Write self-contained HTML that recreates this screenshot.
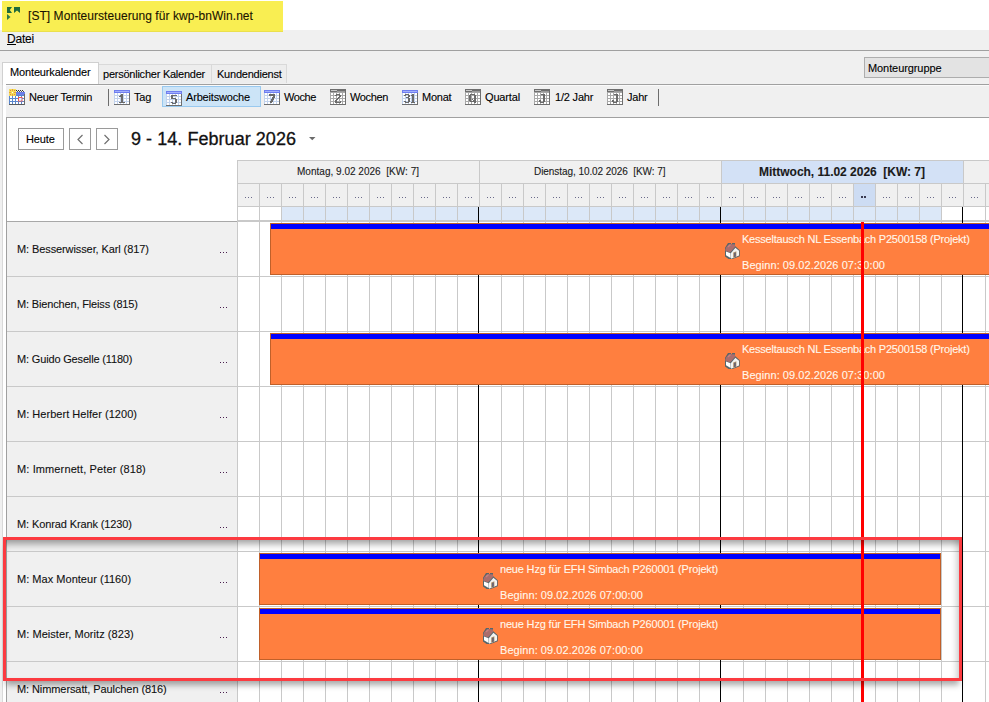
<!DOCTYPE html><html><head><meta charset="utf-8"><style>
html,body{margin:0;padding:0;}
body{width:989px;height:702px;position:relative;overflow:hidden;background:#fff;font-family:"Liberation Sans",sans-serif;}
div{position:absolute;box-sizing:border-box;}
.t{white-space:pre;-webkit-text-stroke:0.1px currentColor;}
svg{position:absolute;}
</style></head><body>
<div style="left:0px;top:30px;width:989px;height:20px;background:#f0f0f0;"></div>
<div style="left:2px;top:1px;width:281px;height:31px;background:#f9ee52;"></div>
<div style="left:2px;top:31px;width:281px;height:1px;background:#ebe04c;"></div>
<div style="left:0px;top:50px;width:989px;height:1px;background:#a0a0a0;"></div>
<svg style="left:7px;top:7px" width="14" height="14" viewBox="0 0 14 14">
<path d="M0 0h5l-2.2 3 2.2 3h-5z" fill="#1f6a3c"/>
<path d="M7 0h6v6l-3-2.5-3 2.5z" fill="#1f6a3c"/>
<path d="M0 7l3.5 3-3.5 3z" fill="#2b7a48"/>
</svg>
<div class="t" style="left:28px;top:9.5px;font-size:12px;line-height:12px;font-weight:normal;color:#1a1200;letter-spacing:0.057px;">[ST] Monteursteuerung für kwp-bnWin.net</div>
<div class="t" style="left:7px;top:33px;font-size:12px;line-height:12px;font-weight:normal;color:#000;letter-spacing:-0.203px;">Datei</div>
<div style="left:7px;top:44px;width:9px;height:1px;background:#000;"></div>
<div style="left:0px;top:51px;width:989px;height:34px;background:#f0f0f0;"></div>
<div style="left:0px;top:84px;width:2px;height:618px;background:#f0f0f0;"></div>
<div style="left:2px;top:84px;width:987px;height:618px;background:#fff;border-left:1px solid #d9d9d9;"></div>
<div style="left:98px;top:64px;width:114px;height:19px;background:#ededed;border:1px solid #d9d9d9;border-bottom:none;"></div>
<div style="left:211px;top:64px;width:76px;height:19px;background:#ededed;border:1px solid #d9d9d9;border-bottom:none;"></div>
<div style="left:2px;top:62px;width:97px;height:23px;background:#fff;border:1px solid #d0d0d0;border-bottom:none;"></div>
<div class="t" style="left:10px;top:67px;font-size:11px;line-height:11px;font-weight:normal;color:#000;letter-spacing:-0.143px;">Monteurkalender</div>
<div class="t" style="left:103px;top:69px;font-size:11px;line-height:11px;font-weight:normal;color:#000;letter-spacing:-0.238px;">persönlicher Kalender</div>
<div class="t" style="left:217px;top:69px;font-size:11px;line-height:11px;font-weight:normal;color:#000;letter-spacing:-0.223px;">Kundendienst</div>
<div style="left:864px;top:57px;width:125px;height:21px;background:#e3e3e3;border:1px solid #adadad;border-right:none;"></div>
<div class="t" style="left:868px;top:63px;font-size:11px;line-height:11px;font-weight:normal;color:#000;letter-spacing:-0.085px;">Monteurgruppe</div>
<div style="left:6px;top:84px;width:983px;height:1px;background:#a0a0a0;"></div>
<div style="left:6px;top:85px;width:983px;height:32px;background:#f0f0f0;"></div>
<div style="left:6px;top:85px;width:983px;height:1px;background:#fafafa;"></div>
<div style="left:162px;top:86px;width:99px;height:21px;background:#cce4f7;border:1px solid #99c9ef;"></div>
<div style="left:108px;top:89px;width:1px;height:17px;background:#6d6d6d;"></div>
<div style="left:658px;top:89px;width:1px;height:17px;background:#6d6d6d;"></div>
<svg style="left:9px;top:89px" width="16" height="16" viewBox="0 0 16 16"><rect x="0" y="5" width="16" height="11" fill="#5a86cc"/><rect x="6" y="3" width="10" height="3" fill="#6c7ee8"/><rect x="7" y="1" width="1" height="1" fill="#333"/><rect x="8" y="2" width="1" height="1" fill="#555"/><rect x="9" y="1" width="1" height="1" fill="#333"/><rect x="10" y="2" width="1" height="1" fill="#555"/><rect x="11" y="1" width="1" height="1" fill="#333"/><rect x="12" y="2" width="1" height="1" fill="#555"/><rect x="13" y="1" width="1" height="1" fill="#333"/><rect x="14" y="2" width="1" height="1" fill="#555"/><rect x="1" y="7" width="2" height="2" fill="#fff"/><rect x="4" y="7" width="2" height="2" fill="#fff"/><rect x="7" y="7" width="2" height="2" fill="#fff"/><rect x="10" y="7" width="2" height="2" fill="#fff"/><rect x="13" y="7" width="2" height="2" fill="#fff"/><rect x="1" y="10" width="2" height="2" fill="#fff"/><rect x="4" y="10" width="2" height="2" fill="#fff"/><rect x="7" y="10" width="2" height="2" fill="#fff"/><rect x="10" y="10" width="2" height="2" fill="#fff"/><rect x="13" y="10" width="2" height="2" fill="#fff"/><rect x="1" y="13" width="2" height="2" fill="#fff"/><rect x="4" y="13" width="2" height="2" fill="#fff"/><rect x="7" y="13" width="2" height="2" fill="#fff"/><rect x="10" y="13" width="2" height="2" fill="#fff"/><rect x="13" y="13" width="2" height="2" fill="#fff"/><rect x="9.5" y="8.5" width="3.5" height="3.5" fill="none" stroke="#e85858" stroke-width="1"/><rect x="10" y="9" width="2.5" height="2.5" fill="#e8f4ff"/><rect x="0" y="15" width="16" height="1" fill="#5a5a5a"/><rect x="15" y="5" width="1" height="11" fill="#6a6a6a"/><rect x="0" y="0" width="7" height="7" fill="#f6dc5a"/><rect x="1" y="1" width="1" height="1" fill="#e08a40"/><rect x="5" y="1" width="1" height="1" fill="#e08a40"/><rect x="1" y="5" width="1" height="1" fill="#e08a40"/><rect x="5" y="5" width="1" height="1" fill="#e08a40"/><rect x="3" y="0" width="1" height="2" fill="#e8a040"/><rect x="3" y="5" width="1" height="2" fill="#e8a040"/><rect x="0" y="3" width="2" height="1" fill="#e8a040"/><rect x="5" y="3" width="2" height="1" fill="#e8a040"/><rect x="3" y="3" width="1" height="1" fill="#fff"/></svg>
<div class="t" style="left:29px;top:92px;font-size:11px;line-height:11px;font-weight:normal;color:#000;letter-spacing:-0.218px;">Neuer Termin</div>
<svg style="left:114px;top:90px" width="16" height="15" viewBox="0 0 16 15" shape-rendering="crispEdges"><rect x="0" y="0" width="16" height="15" fill="#c2d2ec"/><rect x="0" y="0" width="16" height="3" fill="#6f7ef0"/><rect x="1" y="1" width="14" height="1" fill="#a3b0fa"/><rect x="1" y="3" width="2" height="2" fill="#fff"/><rect x="4" y="3" width="2" height="2" fill="#fff"/><rect x="7" y="3" width="2" height="2" fill="#fff"/><rect x="10" y="3" width="2" height="2" fill="#fff"/><rect x="13" y="3" width="2" height="2" fill="#fff"/><rect x="1" y="6" width="2" height="2" fill="#fff"/><rect x="4" y="6" width="2" height="2" fill="#fff"/><rect x="7" y="6" width="2" height="2" fill="#fff"/><rect x="10" y="6" width="2" height="2" fill="#fff"/><rect x="13" y="6" width="2" height="2" fill="#fff"/><rect x="1" y="9" width="2" height="2" fill="#fff"/><rect x="4" y="9" width="2" height="2" fill="#fff"/><rect x="7" y="9" width="2" height="2" fill="#fff"/><rect x="10" y="9" width="2" height="2" fill="#fff"/><rect x="13" y="9" width="2" height="2" fill="#fff"/><rect x="1" y="12" width="2" height="2" fill="#fff"/><rect x="4" y="12" width="2" height="2" fill="#fff"/><rect x="7" y="12" width="2" height="2" fill="#fff"/><rect x="10" y="12" width="2" height="2" fill="#fff"/><rect x="13" y="12" width="2" height="2" fill="#fff"/><rect x="15" y="3" width="1" height="12" fill="#6e6e6e"/><rect x="0" y="14" width="16" height="1" fill="#6e6e6e"/><rect x="7" y="4" width="2" height="1" fill="#6a6a6a"/><rect x="6" y="5" width="3" height="1" fill="#6a6a6a"/><rect x="5" y="6" width="4" height="1" fill="#6a6a6a"/><rect x="7" y="7" width="2" height="1" fill="#6a6a6a"/><rect x="7" y="8" width="2" height="1" fill="#6a6a6a"/><rect x="7" y="9" width="2" height="1" fill="#6a6a6a"/><rect x="7" y="10" width="2" height="1" fill="#6a6a6a"/><rect x="7" y="11" width="2" height="1" fill="#6a6a6a"/><rect x="5" y="12" width="6" height="1" fill="#6a6a6a"/></svg>
<div class="t" style="left:134px;top:92px;font-size:11px;line-height:11px;font-weight:normal;color:#000;letter-spacing:-0.178px;">Tag</div>
<svg style="left:166px;top:91px" width="16" height="15" viewBox="0 0 16 15" shape-rendering="crispEdges"><rect x="0" y="0" width="16" height="15" fill="#c2d2ec"/><rect x="0" y="0" width="16" height="3" fill="#6f7ef0"/><rect x="1" y="1" width="14" height="1" fill="#a3b0fa"/><rect x="1" y="3" width="2" height="2" fill="#fff"/><rect x="4" y="3" width="2" height="2" fill="#fff"/><rect x="7" y="3" width="2" height="2" fill="#fff"/><rect x="10" y="3" width="2" height="2" fill="#fff"/><rect x="13" y="3" width="2" height="2" fill="#fff"/><rect x="1" y="6" width="2" height="2" fill="#fff"/><rect x="4" y="6" width="2" height="2" fill="#fff"/><rect x="7" y="6" width="2" height="2" fill="#fff"/><rect x="10" y="6" width="2" height="2" fill="#fff"/><rect x="13" y="6" width="2" height="2" fill="#fff"/><rect x="1" y="9" width="2" height="2" fill="#fff"/><rect x="4" y="9" width="2" height="2" fill="#fff"/><rect x="7" y="9" width="2" height="2" fill="#fff"/><rect x="10" y="9" width="2" height="2" fill="#fff"/><rect x="13" y="9" width="2" height="2" fill="#fff"/><rect x="1" y="12" width="2" height="2" fill="#fff"/><rect x="4" y="12" width="2" height="2" fill="#fff"/><rect x="7" y="12" width="2" height="2" fill="#fff"/><rect x="10" y="12" width="2" height="2" fill="#fff"/><rect x="13" y="12" width="2" height="2" fill="#fff"/><rect x="15" y="3" width="1" height="12" fill="#6e6e6e"/><rect x="0" y="14" width="16" height="1" fill="#6e6e6e"/><rect x="5" y="4" width="6" height="1" fill="#6a6a6a"/><rect x="5" y="5" width="2" height="1" fill="#6a6a6a"/><rect x="5" y="6" width="2" height="1" fill="#6a6a6a"/><rect x="5" y="7" width="5" height="1" fill="#6a6a6a"/><rect x="9" y="8" width="2" height="1" fill="#6a6a6a"/><rect x="9" y="9" width="2" height="1" fill="#6a6a6a"/><rect x="9" y="10" width="2" height="1" fill="#6a6a6a"/><rect x="5" y="11" width="2" height="1" fill="#6a6a6a"/><rect x="9" y="11" width="2" height="1" fill="#6a6a6a"/><rect x="6" y="12" width="4" height="1" fill="#6a6a6a"/></svg>
<div class="t" style="left:186px;top:92px;font-size:11px;line-height:11px;font-weight:normal;color:#000;letter-spacing:-0.169px;">Arbeitswoche</div>
<svg style="left:264px;top:90px" width="16" height="15" viewBox="0 0 16 15" shape-rendering="crispEdges"><rect x="0" y="0" width="16" height="15" fill="#c2d2ec"/><rect x="0" y="0" width="16" height="3" fill="#6f7ef0"/><rect x="1" y="1" width="14" height="1" fill="#a3b0fa"/><rect x="1" y="3" width="2" height="2" fill="#fff"/><rect x="4" y="3" width="2" height="2" fill="#fff"/><rect x="7" y="3" width="2" height="2" fill="#fff"/><rect x="10" y="3" width="2" height="2" fill="#fff"/><rect x="13" y="3" width="2" height="2" fill="#fff"/><rect x="1" y="6" width="2" height="2" fill="#fff"/><rect x="4" y="6" width="2" height="2" fill="#fff"/><rect x="7" y="6" width="2" height="2" fill="#fff"/><rect x="10" y="6" width="2" height="2" fill="#fff"/><rect x="13" y="6" width="2" height="2" fill="#fff"/><rect x="1" y="9" width="2" height="2" fill="#fff"/><rect x="4" y="9" width="2" height="2" fill="#fff"/><rect x="7" y="9" width="2" height="2" fill="#fff"/><rect x="10" y="9" width="2" height="2" fill="#fff"/><rect x="13" y="9" width="2" height="2" fill="#fff"/><rect x="1" y="12" width="2" height="2" fill="#fff"/><rect x="4" y="12" width="2" height="2" fill="#fff"/><rect x="7" y="12" width="2" height="2" fill="#fff"/><rect x="10" y="12" width="2" height="2" fill="#fff"/><rect x="13" y="12" width="2" height="2" fill="#fff"/><rect x="15" y="3" width="1" height="12" fill="#6e6e6e"/><rect x="0" y="14" width="16" height="1" fill="#6e6e6e"/><rect x="5" y="4" width="6" height="1" fill="#6a6a6a"/><rect x="5" y="5" width="6" height="1" fill="#6a6a6a"/><rect x="9" y="6" width="2" height="1" fill="#6a6a6a"/><rect x="8" y="7" width="3" height="1" fill="#6a6a6a"/><rect x="8" y="8" width="2" height="1" fill="#6a6a6a"/><rect x="7" y="9" width="3" height="1" fill="#6a6a6a"/><rect x="7" y="10" width="2" height="1" fill="#6a6a6a"/><rect x="6" y="11" width="3" height="1" fill="#6a6a6a"/><rect x="6" y="12" width="2" height="1" fill="#6a6a6a"/></svg>
<div class="t" style="left:284px;top:92px;font-size:11px;line-height:11px;font-weight:normal;color:#000;letter-spacing:-0.407px;">Woche</div>
<svg style="left:330px;top:89px" width="16" height="16" viewBox="0 0 16 16" shape-rendering="crispEdges"><rect x="0" y="0" width="16" height="16" fill="#a8a8a8"/><rect x="0" y="0" width="16" height="3" fill="#6e6e6e"/><rect x="1" y="1" width="6" height="1" fill="#c8c8c8"/><rect x="7" y="2" width="8" height="1" fill="#9a9a9a"/><rect x="1" y="4" width="2" height="2" fill="#fff"/><rect x="4" y="4" width="2" height="2" fill="#fff"/><rect x="7" y="4" width="2" height="2" fill="#fff"/><rect x="10" y="4" width="2" height="2" fill="#fff"/><rect x="13" y="4" width="2" height="2" fill="#fff"/><rect x="1" y="7" width="2" height="2" fill="#fff"/><rect x="4" y="7" width="2" height="2" fill="#fff"/><rect x="7" y="7" width="2" height="2" fill="#fff"/><rect x="10" y="7" width="2" height="2" fill="#fff"/><rect x="13" y="7" width="2" height="2" fill="#fff"/><rect x="1" y="10" width="2" height="2" fill="#fff"/><rect x="4" y="10" width="2" height="2" fill="#fff"/><rect x="7" y="10" width="2" height="2" fill="#fff"/><rect x="10" y="10" width="2" height="2" fill="#fff"/><rect x="13" y="10" width="2" height="2" fill="#fff"/><rect x="1" y="13" width="2" height="2" fill="#fff"/><rect x="4" y="13" width="2" height="2" fill="#fff"/><rect x="7" y="13" width="2" height="2" fill="#fff"/><rect x="10" y="13" width="2" height="2" fill="#fff"/><rect x="13" y="13" width="2" height="2" fill="#fff"/><rect x="15" y="3" width="1" height="13" fill="#6e6e6e"/><rect x="0" y="15" width="16" height="1" fill="#6e6e6e"/><rect x="6" y="5" width="4" height="1" fill="#6a6a6a"/><rect x="5" y="6" width="2" height="1" fill="#6a6a6a"/><rect x="9" y="6" width="2" height="1" fill="#6a6a6a"/><rect x="9" y="7" width="2" height="1" fill="#6a6a6a"/><rect x="8" y="8" width="2" height="1" fill="#6a6a6a"/><rect x="7" y="9" width="2" height="1" fill="#6a6a6a"/><rect x="6" y="10" width="2" height="1" fill="#6a6a6a"/><rect x="5" y="11" width="2" height="1" fill="#6a6a6a"/><rect x="5" y="12" width="2" height="1" fill="#6a6a6a"/><rect x="10" y="12" width="1" height="1" fill="#6a6a6a"/><rect x="5" y="13" width="6" height="1" fill="#6a6a6a"/></svg>
<div class="t" style="left:350px;top:92px;font-size:11px;line-height:11px;font-weight:normal;color:#000;letter-spacing:-0.359px;">Wochen</div>
<svg style="left:402px;top:90px" width="16" height="15" viewBox="0 0 16 15" shape-rendering="crispEdges"><rect x="0" y="0" width="16" height="15" fill="#c2d2ec"/><rect x="0" y="0" width="16" height="3" fill="#6f7ef0"/><rect x="1" y="1" width="14" height="1" fill="#a3b0fa"/><rect x="1" y="3" width="2" height="2" fill="#fff"/><rect x="4" y="3" width="2" height="2" fill="#fff"/><rect x="7" y="3" width="2" height="2" fill="#fff"/><rect x="10" y="3" width="2" height="2" fill="#fff"/><rect x="13" y="3" width="2" height="2" fill="#fff"/><rect x="1" y="6" width="2" height="2" fill="#fff"/><rect x="4" y="6" width="2" height="2" fill="#fff"/><rect x="7" y="6" width="2" height="2" fill="#fff"/><rect x="10" y="6" width="2" height="2" fill="#fff"/><rect x="13" y="6" width="2" height="2" fill="#fff"/><rect x="1" y="9" width="2" height="2" fill="#fff"/><rect x="4" y="9" width="2" height="2" fill="#fff"/><rect x="7" y="9" width="2" height="2" fill="#fff"/><rect x="10" y="9" width="2" height="2" fill="#fff"/><rect x="13" y="9" width="2" height="2" fill="#fff"/><rect x="1" y="12" width="2" height="2" fill="#fff"/><rect x="4" y="12" width="2" height="2" fill="#fff"/><rect x="7" y="12" width="2" height="2" fill="#fff"/><rect x="10" y="12" width="2" height="2" fill="#fff"/><rect x="13" y="12" width="2" height="2" fill="#fff"/><rect x="15" y="3" width="1" height="12" fill="#6e6e6e"/><rect x="0" y="14" width="16" height="1" fill="#6e6e6e"/><rect x="3" y="4" width="4" height="1" fill="#6a6a6a"/><rect x="10" y="4" width="2" height="1" fill="#6a6a6a"/><rect x="2" y="5" width="2" height="1" fill="#6a6a6a"/><rect x="6" y="5" width="2" height="1" fill="#6a6a6a"/><rect x="9" y="5" width="3" height="1" fill="#6a6a6a"/><rect x="6" y="6" width="2" height="1" fill="#6a6a6a"/><rect x="10" y="6" width="2" height="1" fill="#6a6a6a"/><rect x="4" y="7" width="3" height="1" fill="#6a6a6a"/><rect x="10" y="7" width="2" height="1" fill="#6a6a6a"/><rect x="6" y="8" width="2" height="1" fill="#6a6a6a"/><rect x="10" y="8" width="2" height="1" fill="#6a6a6a"/><rect x="6" y="9" width="2" height="1" fill="#6a6a6a"/><rect x="10" y="9" width="2" height="1" fill="#6a6a6a"/><rect x="6" y="10" width="2" height="1" fill="#6a6a6a"/><rect x="10" y="10" width="2" height="1" fill="#6a6a6a"/><rect x="2" y="11" width="2" height="1" fill="#6a6a6a"/><rect x="6" y="11" width="2" height="1" fill="#6a6a6a"/><rect x="10" y="11" width="2" height="1" fill="#6a6a6a"/><rect x="3" y="12" width="4" height="1" fill="#6a6a6a"/><rect x="9" y="12" width="4" height="1" fill="#6a6a6a"/></svg>
<div class="t" style="left:422px;top:92px;font-size:11px;line-height:11px;font-weight:normal;color:#000;letter-spacing:-0.234px;">Monat</div>
<svg style="left:465px;top:89px" width="16" height="16" viewBox="0 0 16 16" shape-rendering="crispEdges"><rect x="0" y="0" width="16" height="16" fill="#a8a8a8"/><rect x="0" y="0" width="16" height="3" fill="#6e6e6e"/><rect x="1" y="1" width="6" height="1" fill="#c8c8c8"/><rect x="7" y="2" width="8" height="1" fill="#9a9a9a"/><rect x="1" y="4" width="2" height="2" fill="#fff"/><rect x="4" y="4" width="2" height="2" fill="#fff"/><rect x="7" y="4" width="2" height="2" fill="#fff"/><rect x="10" y="4" width="2" height="2" fill="#fff"/><rect x="13" y="4" width="2" height="2" fill="#fff"/><rect x="1" y="7" width="2" height="2" fill="#fff"/><rect x="4" y="7" width="2" height="2" fill="#fff"/><rect x="7" y="7" width="2" height="2" fill="#fff"/><rect x="10" y="7" width="2" height="2" fill="#fff"/><rect x="13" y="7" width="2" height="2" fill="#fff"/><rect x="1" y="10" width="2" height="2" fill="#fff"/><rect x="4" y="10" width="2" height="2" fill="#fff"/><rect x="7" y="10" width="2" height="2" fill="#fff"/><rect x="10" y="10" width="2" height="2" fill="#fff"/><rect x="13" y="10" width="2" height="2" fill="#fff"/><rect x="1" y="13" width="2" height="2" fill="#fff"/><rect x="4" y="13" width="2" height="2" fill="#fff"/><rect x="7" y="13" width="2" height="2" fill="#fff"/><rect x="10" y="13" width="2" height="2" fill="#fff"/><rect x="13" y="13" width="2" height="2" fill="#fff"/><rect x="15" y="3" width="1" height="13" fill="#6e6e6e"/><rect x="0" y="15" width="16" height="1" fill="#6e6e6e"/><rect x="5" y="5" width="5" height="1" fill="#6a6a6a"/><rect x="4" y="6" width="2" height="1" fill="#6a6a6a"/><rect x="9" y="6" width="2" height="1" fill="#6a6a6a"/><rect x="4" y="7" width="2" height="1" fill="#6a6a6a"/><rect x="9" y="7" width="2" height="1" fill="#6a6a6a"/><rect x="4" y="8" width="2" height="1" fill="#6a6a6a"/><rect x="9" y="8" width="2" height="1" fill="#6a6a6a"/><rect x="4" y="9" width="2" height="1" fill="#6a6a6a"/><rect x="9" y="9" width="2" height="1" fill="#6a6a6a"/><rect x="4" y="10" width="2" height="1" fill="#6a6a6a"/><rect x="7" y="10" width="1" height="1" fill="#6a6a6a"/><rect x="9" y="10" width="2" height="1" fill="#6a6a6a"/><rect x="4" y="11" width="2" height="1" fill="#6a6a6a"/><rect x="8" y="11" width="3" height="1" fill="#6a6a6a"/><rect x="5" y="12" width="6" height="1" fill="#6a6a6a"/><rect x="9" y="13" width="2" height="1" fill="#6a6a6a"/></svg>
<div class="t" style="left:485px;top:92px;font-size:11px;line-height:11px;font-weight:normal;color:#000;letter-spacing:-0.153px;">Quartal</div>
<svg style="left:534px;top:89px" width="16" height="16" viewBox="0 0 16 16" shape-rendering="crispEdges"><rect x="0" y="0" width="16" height="16" fill="#a8a8a8"/><rect x="0" y="0" width="16" height="3" fill="#6e6e6e"/><rect x="1" y="1" width="6" height="1" fill="#c8c8c8"/><rect x="7" y="2" width="8" height="1" fill="#9a9a9a"/><rect x="1" y="4" width="2" height="2" fill="#fff"/><rect x="4" y="4" width="2" height="2" fill="#fff"/><rect x="7" y="4" width="2" height="2" fill="#fff"/><rect x="10" y="4" width="2" height="2" fill="#fff"/><rect x="13" y="4" width="2" height="2" fill="#fff"/><rect x="1" y="7" width="2" height="2" fill="#fff"/><rect x="4" y="7" width="2" height="2" fill="#fff"/><rect x="7" y="7" width="2" height="2" fill="#fff"/><rect x="10" y="7" width="2" height="2" fill="#fff"/><rect x="13" y="7" width="2" height="2" fill="#fff"/><rect x="1" y="10" width="2" height="2" fill="#fff"/><rect x="4" y="10" width="2" height="2" fill="#fff"/><rect x="7" y="10" width="2" height="2" fill="#fff"/><rect x="10" y="10" width="2" height="2" fill="#fff"/><rect x="13" y="10" width="2" height="2" fill="#fff"/><rect x="1" y="13" width="2" height="2" fill="#fff"/><rect x="4" y="13" width="2" height="2" fill="#fff"/><rect x="7" y="13" width="2" height="2" fill="#fff"/><rect x="10" y="13" width="2" height="2" fill="#fff"/><rect x="13" y="13" width="2" height="2" fill="#fff"/><rect x="15" y="3" width="1" height="13" fill="#6e6e6e"/><rect x="0" y="15" width="16" height="1" fill="#6e6e6e"/><rect x="7" y="5" width="4" height="1" fill="#6a6a6a"/><rect x="9" y="6" width="2" height="1" fill="#6a6a6a"/><rect x="9" y="7" width="2" height="1" fill="#6a6a6a"/><rect x="9" y="8" width="2" height="1" fill="#6a6a6a"/><rect x="9" y="9" width="2" height="1" fill="#6a6a6a"/><rect x="9" y="10" width="2" height="1" fill="#6a6a6a"/><rect x="5" y="11" width="2" height="1" fill="#6a6a6a"/><rect x="9" y="11" width="2" height="1" fill="#6a6a6a"/><rect x="5" y="12" width="2" height="1" fill="#6a6a6a"/><rect x="9" y="12" width="2" height="1" fill="#6a6a6a"/><rect x="6" y="13" width="4" height="1" fill="#6a6a6a"/></svg>
<div class="t" style="left:555px;top:92px;font-size:11px;line-height:11px;font-weight:normal;color:#000;letter-spacing:-0.193px;">1/2 Jahr</div>
<svg style="left:607px;top:89px" width="16" height="16" viewBox="0 0 16 16" shape-rendering="crispEdges"><rect x="0" y="0" width="16" height="16" fill="#a8a8a8"/><rect x="0" y="0" width="16" height="3" fill="#6e6e6e"/><rect x="1" y="1" width="6" height="1" fill="#c8c8c8"/><rect x="7" y="2" width="8" height="1" fill="#9a9a9a"/><rect x="1" y="4" width="2" height="2" fill="#fff"/><rect x="4" y="4" width="2" height="2" fill="#fff"/><rect x="7" y="4" width="2" height="2" fill="#fff"/><rect x="10" y="4" width="2" height="2" fill="#fff"/><rect x="13" y="4" width="2" height="2" fill="#fff"/><rect x="1" y="7" width="2" height="2" fill="#fff"/><rect x="4" y="7" width="2" height="2" fill="#fff"/><rect x="7" y="7" width="2" height="2" fill="#fff"/><rect x="10" y="7" width="2" height="2" fill="#fff"/><rect x="13" y="7" width="2" height="2" fill="#fff"/><rect x="1" y="10" width="2" height="2" fill="#fff"/><rect x="4" y="10" width="2" height="2" fill="#fff"/><rect x="7" y="10" width="2" height="2" fill="#fff"/><rect x="10" y="10" width="2" height="2" fill="#fff"/><rect x="13" y="10" width="2" height="2" fill="#fff"/><rect x="1" y="13" width="2" height="2" fill="#fff"/><rect x="4" y="13" width="2" height="2" fill="#fff"/><rect x="7" y="13" width="2" height="2" fill="#fff"/><rect x="10" y="13" width="2" height="2" fill="#fff"/><rect x="13" y="13" width="2" height="2" fill="#fff"/><rect x="15" y="3" width="1" height="13" fill="#6e6e6e"/><rect x="0" y="15" width="16" height="1" fill="#6e6e6e"/><rect x="7" y="5" width="4" height="1" fill="#6a6a6a"/><rect x="9" y="6" width="2" height="1" fill="#6a6a6a"/><rect x="9" y="7" width="2" height="1" fill="#6a6a6a"/><rect x="9" y="8" width="2" height="1" fill="#6a6a6a"/><rect x="9" y="9" width="2" height="1" fill="#6a6a6a"/><rect x="9" y="10" width="2" height="1" fill="#6a6a6a"/><rect x="5" y="11" width="2" height="1" fill="#6a6a6a"/><rect x="9" y="11" width="2" height="1" fill="#6a6a6a"/><rect x="5" y="12" width="2" height="1" fill="#6a6a6a"/><rect x="9" y="12" width="2" height="1" fill="#6a6a6a"/><rect x="6" y="13" width="4" height="1" fill="#6a6a6a"/></svg>
<div class="t" style="left:627px;top:92px;font-size:11px;line-height:11px;font-weight:normal;color:#000;letter-spacing:-0.225px;">Jahr</div>
<div style="left:6px;top:117px;width:983px;height:1px;background:#a0a0a0;"></div>
<div style="left:6px;top:117px;width:1px;height:585px;background:#a0a0a0;"></div>
<div style="left:18px;top:128px;width:46px;height:22px;background:#fff;border:1px solid #9a9a9a;"></div>
<div class="t" style="left:26px;top:134px;font-size:11px;line-height:11px;font-weight:normal;color:#000;letter-spacing:-0.151px;">Heute</div>
<div style="left:69px;top:128px;width:22px;height:22px;background:#fff;border:1px solid #9a9a9a;"></div>
<div style="left:96px;top:128px;width:22px;height:22px;background:#fff;border:1px solid #9a9a9a;"></div>
<svg style="left:69px;top:128px" width="22" height="22"><path d="M13.5 7 L9 11.5 L13.5 16" stroke="#707070" stroke-width="1.2" fill="none"/></svg>
<svg style="left:96px;top:128px" width="22" height="22"><path d="M8.5 7 L13 11.5 L8.5 16" stroke="#707070" stroke-width="1.2" fill="none"/></svg>
<div class="t" style="left:131px;top:130px;font-size:18px;line-height:18px;font-weight:normal;color:#111;letter-spacing:0.045px;-webkit-text-stroke:0.3px #111;">9 - 14. Februar 2026</div>
<svg style="left:308px;top:136px" width="9" height="6"><path d="M1 1h6.5l-3.25 3.2z" fill="#6a6a6a"/></svg>
<div style="left:237px;top:160px;width:752px;height:1px;background:#c9c9c9"></div>
<div style="left:237px;top:161px;width:752px;height:22px;background:#f0f0f0;"></div>
<div style="left:721px;top:161px;width:242px;height:22px;background:#d3e1f6;"></div>
<div style="left:237px;top:183px;width:752px;height:1px;background:#c9c9c9"></div>
<div style="left:237px;top:184px;width:752px;height:22px;background:#f0f0f0;"></div>
<div style="left:853px;top:184px;width:22px;height:22px;background:#cddcf3;"></div>
<div style="left:237px;top:206px;width:752px;height:1px;background:#c9c9c9"></div>
<div style="left:237px;top:207px;width:752px;height:13px;background:#fff;"></div>
<div style="left:281px;top:207px;width:660px;height:13px;background:#dce8f8;"></div>
<div style="left:237px;top:220px;width:752px;height:2px;background:#c9c9c9"></div>
<div style="left:237px;top:160px;width:1px;height:542px;background:#c9c9c9"></div>
<div style="left:259px;top:184px;width:1px;height:22px;background:#c9c9c9"></div>
<div style="left:259px;top:207px;width:1px;height:13px;background:#c9c9c9"></div>
<div style="left:259px;top:222px;width:1px;height:480px;background:#c9c9c9"></div>
<div style="left:281px;top:184px;width:1px;height:22px;background:#c9c9c9"></div>
<div style="left:281px;top:207px;width:1px;height:13px;background:#c9c9c9"></div>
<div style="left:281px;top:222px;width:1px;height:480px;background:#c9c9c9"></div>
<div style="left:303px;top:184px;width:1px;height:22px;background:#c9c9c9"></div>
<div style="left:303px;top:207px;width:1px;height:13px;background:#c9c9c9"></div>
<div style="left:303px;top:222px;width:1px;height:480px;background:#c9c9c9"></div>
<div style="left:325px;top:184px;width:1px;height:22px;background:#c9c9c9"></div>
<div style="left:325px;top:207px;width:1px;height:13px;background:#c9c9c9"></div>
<div style="left:325px;top:222px;width:1px;height:480px;background:#c9c9c9"></div>
<div style="left:347px;top:184px;width:1px;height:22px;background:#c9c9c9"></div>
<div style="left:347px;top:207px;width:1px;height:13px;background:#c9c9c9"></div>
<div style="left:347px;top:222px;width:1px;height:480px;background:#c9c9c9"></div>
<div style="left:369px;top:184px;width:1px;height:22px;background:#c9c9c9"></div>
<div style="left:369px;top:207px;width:1px;height:13px;background:#c9c9c9"></div>
<div style="left:369px;top:222px;width:1px;height:480px;background:#c9c9c9"></div>
<div style="left:391px;top:184px;width:1px;height:22px;background:#c9c9c9"></div>
<div style="left:391px;top:207px;width:1px;height:13px;background:#c9c9c9"></div>
<div style="left:391px;top:222px;width:1px;height:480px;background:#c9c9c9"></div>
<div style="left:413px;top:184px;width:1px;height:22px;background:#c9c9c9"></div>
<div style="left:413px;top:207px;width:1px;height:13px;background:#c9c9c9"></div>
<div style="left:413px;top:222px;width:1px;height:480px;background:#c9c9c9"></div>
<div style="left:435px;top:184px;width:1px;height:22px;background:#c9c9c9"></div>
<div style="left:435px;top:207px;width:1px;height:13px;background:#c9c9c9"></div>
<div style="left:435px;top:222px;width:1px;height:480px;background:#c9c9c9"></div>
<div style="left:457px;top:184px;width:1px;height:22px;background:#c9c9c9"></div>
<div style="left:457px;top:207px;width:1px;height:13px;background:#c9c9c9"></div>
<div style="left:457px;top:222px;width:1px;height:480px;background:#c9c9c9"></div>
<div style="left:479px;top:161px;width:1px;height:45px;background:#c9c9c9"></div>
<div style="left:478px;top:207px;width:1px;height:495px;background:#000;"></div>
<div style="left:501px;top:184px;width:1px;height:22px;background:#c9c9c9"></div>
<div style="left:501px;top:207px;width:1px;height:13px;background:#c9c9c9"></div>
<div style="left:501px;top:222px;width:1px;height:480px;background:#c9c9c9"></div>
<div style="left:523px;top:184px;width:1px;height:22px;background:#c9c9c9"></div>
<div style="left:523px;top:207px;width:1px;height:13px;background:#c9c9c9"></div>
<div style="left:523px;top:222px;width:1px;height:480px;background:#c9c9c9"></div>
<div style="left:545px;top:184px;width:1px;height:22px;background:#c9c9c9"></div>
<div style="left:545px;top:207px;width:1px;height:13px;background:#c9c9c9"></div>
<div style="left:545px;top:222px;width:1px;height:480px;background:#c9c9c9"></div>
<div style="left:567px;top:184px;width:1px;height:22px;background:#c9c9c9"></div>
<div style="left:567px;top:207px;width:1px;height:13px;background:#c9c9c9"></div>
<div style="left:567px;top:222px;width:1px;height:480px;background:#c9c9c9"></div>
<div style="left:589px;top:184px;width:1px;height:22px;background:#c9c9c9"></div>
<div style="left:589px;top:207px;width:1px;height:13px;background:#c9c9c9"></div>
<div style="left:589px;top:222px;width:1px;height:480px;background:#c9c9c9"></div>
<div style="left:611px;top:184px;width:1px;height:22px;background:#c9c9c9"></div>
<div style="left:611px;top:207px;width:1px;height:13px;background:#c9c9c9"></div>
<div style="left:611px;top:222px;width:1px;height:480px;background:#c9c9c9"></div>
<div style="left:633px;top:184px;width:1px;height:22px;background:#c9c9c9"></div>
<div style="left:633px;top:207px;width:1px;height:13px;background:#c9c9c9"></div>
<div style="left:633px;top:222px;width:1px;height:480px;background:#c9c9c9"></div>
<div style="left:655px;top:184px;width:1px;height:22px;background:#c9c9c9"></div>
<div style="left:655px;top:207px;width:1px;height:13px;background:#c9c9c9"></div>
<div style="left:655px;top:222px;width:1px;height:480px;background:#c9c9c9"></div>
<div style="left:677px;top:184px;width:1px;height:22px;background:#c9c9c9"></div>
<div style="left:677px;top:207px;width:1px;height:13px;background:#c9c9c9"></div>
<div style="left:677px;top:222px;width:1px;height:480px;background:#c9c9c9"></div>
<div style="left:699px;top:184px;width:1px;height:22px;background:#c9c9c9"></div>
<div style="left:699px;top:207px;width:1px;height:13px;background:#c9c9c9"></div>
<div style="left:699px;top:222px;width:1px;height:480px;background:#c9c9c9"></div>
<div style="left:721px;top:161px;width:1px;height:45px;background:#c9c9c9"></div>
<div style="left:720px;top:207px;width:1px;height:495px;background:#000;"></div>
<div style="left:743px;top:184px;width:1px;height:22px;background:#c9c9c9"></div>
<div style="left:743px;top:207px;width:1px;height:13px;background:#c9c9c9"></div>
<div style="left:743px;top:222px;width:1px;height:480px;background:#c9c9c9"></div>
<div style="left:765px;top:184px;width:1px;height:22px;background:#c9c9c9"></div>
<div style="left:765px;top:207px;width:1px;height:13px;background:#c9c9c9"></div>
<div style="left:765px;top:222px;width:1px;height:480px;background:#c9c9c9"></div>
<div style="left:787px;top:184px;width:1px;height:22px;background:#c9c9c9"></div>
<div style="left:787px;top:207px;width:1px;height:13px;background:#c9c9c9"></div>
<div style="left:787px;top:222px;width:1px;height:480px;background:#c9c9c9"></div>
<div style="left:809px;top:184px;width:1px;height:22px;background:#c9c9c9"></div>
<div style="left:809px;top:207px;width:1px;height:13px;background:#c9c9c9"></div>
<div style="left:809px;top:222px;width:1px;height:480px;background:#c9c9c9"></div>
<div style="left:831px;top:184px;width:1px;height:22px;background:#c9c9c9"></div>
<div style="left:831px;top:207px;width:1px;height:13px;background:#c9c9c9"></div>
<div style="left:831px;top:222px;width:1px;height:480px;background:#c9c9c9"></div>
<div style="left:853px;top:184px;width:1px;height:22px;background:#c9c9c9"></div>
<div style="left:853px;top:207px;width:1px;height:13px;background:#c9c9c9"></div>
<div style="left:853px;top:222px;width:1px;height:480px;background:#c9c9c9"></div>
<div style="left:875px;top:184px;width:1px;height:22px;background:#c9c9c9"></div>
<div style="left:875px;top:207px;width:1px;height:13px;background:#c9c9c9"></div>
<div style="left:875px;top:222px;width:1px;height:480px;background:#c9c9c9"></div>
<div style="left:897px;top:184px;width:1px;height:22px;background:#c9c9c9"></div>
<div style="left:897px;top:207px;width:1px;height:13px;background:#c9c9c9"></div>
<div style="left:897px;top:222px;width:1px;height:480px;background:#c9c9c9"></div>
<div style="left:919px;top:184px;width:1px;height:22px;background:#c9c9c9"></div>
<div style="left:919px;top:207px;width:1px;height:13px;background:#c9c9c9"></div>
<div style="left:919px;top:222px;width:1px;height:480px;background:#c9c9c9"></div>
<div style="left:941px;top:184px;width:1px;height:22px;background:#c9c9c9"></div>
<div style="left:941px;top:207px;width:1px;height:13px;background:#c9c9c9"></div>
<div style="left:941px;top:222px;width:1px;height:480px;background:#c9c9c9"></div>
<div style="left:963px;top:161px;width:1px;height:45px;background:#c9c9c9"></div>
<div style="left:962px;top:207px;width:1px;height:495px;background:#000;"></div>
<div style="left:985px;top:184px;width:1px;height:22px;background:#c9c9c9"></div>
<div style="left:985px;top:207px;width:1px;height:13px;background:#c9c9c9"></div>
<div style="left:985px;top:222px;width:1px;height:480px;background:#c9c9c9"></div>
<div style="left:245px;top:197px;width:1px;height:1px;background:#6a6a8a;"></div>
<div style="left:248px;top:197px;width:1px;height:1px;background:#6a6a8a;"></div>
<div style="left:251px;top:197px;width:1px;height:1px;background:#6a6a8a;"></div>
<div style="left:267px;top:197px;width:1px;height:1px;background:#6a6a8a;"></div>
<div style="left:270px;top:197px;width:1px;height:1px;background:#6a6a8a;"></div>
<div style="left:273px;top:197px;width:1px;height:1px;background:#6a6a8a;"></div>
<div style="left:289px;top:197px;width:1px;height:1px;background:#6a6a8a;"></div>
<div style="left:292px;top:197px;width:1px;height:1px;background:#6a6a8a;"></div>
<div style="left:295px;top:197px;width:1px;height:1px;background:#6a6a8a;"></div>
<div style="left:311px;top:197px;width:1px;height:1px;background:#6a6a8a;"></div>
<div style="left:314px;top:197px;width:1px;height:1px;background:#6a6a8a;"></div>
<div style="left:317px;top:197px;width:1px;height:1px;background:#6a6a8a;"></div>
<div style="left:333px;top:197px;width:1px;height:1px;background:#6a6a8a;"></div>
<div style="left:336px;top:197px;width:1px;height:1px;background:#6a6a8a;"></div>
<div style="left:339px;top:197px;width:1px;height:1px;background:#6a6a8a;"></div>
<div style="left:355px;top:197px;width:1px;height:1px;background:#6a6a8a;"></div>
<div style="left:358px;top:197px;width:1px;height:1px;background:#6a6a8a;"></div>
<div style="left:361px;top:197px;width:1px;height:1px;background:#6a6a8a;"></div>
<div style="left:377px;top:197px;width:1px;height:1px;background:#6a6a8a;"></div>
<div style="left:380px;top:197px;width:1px;height:1px;background:#6a6a8a;"></div>
<div style="left:383px;top:197px;width:1px;height:1px;background:#6a6a8a;"></div>
<div style="left:399px;top:197px;width:1px;height:1px;background:#6a6a8a;"></div>
<div style="left:402px;top:197px;width:1px;height:1px;background:#6a6a8a;"></div>
<div style="left:405px;top:197px;width:1px;height:1px;background:#6a6a8a;"></div>
<div style="left:421px;top:197px;width:1px;height:1px;background:#6a6a8a;"></div>
<div style="left:424px;top:197px;width:1px;height:1px;background:#6a6a8a;"></div>
<div style="left:427px;top:197px;width:1px;height:1px;background:#6a6a8a;"></div>
<div style="left:443px;top:197px;width:1px;height:1px;background:#6a6a8a;"></div>
<div style="left:446px;top:197px;width:1px;height:1px;background:#6a6a8a;"></div>
<div style="left:449px;top:197px;width:1px;height:1px;background:#6a6a8a;"></div>
<div style="left:465px;top:197px;width:1px;height:1px;background:#6a6a8a;"></div>
<div style="left:468px;top:197px;width:1px;height:1px;background:#6a6a8a;"></div>
<div style="left:471px;top:197px;width:1px;height:1px;background:#6a6a8a;"></div>
<div style="left:487px;top:197px;width:1px;height:1px;background:#6a6a8a;"></div>
<div style="left:490px;top:197px;width:1px;height:1px;background:#6a6a8a;"></div>
<div style="left:493px;top:197px;width:1px;height:1px;background:#6a6a8a;"></div>
<div style="left:509px;top:197px;width:1px;height:1px;background:#6a6a8a;"></div>
<div style="left:512px;top:197px;width:1px;height:1px;background:#6a6a8a;"></div>
<div style="left:515px;top:197px;width:1px;height:1px;background:#6a6a8a;"></div>
<div style="left:531px;top:197px;width:1px;height:1px;background:#6a6a8a;"></div>
<div style="left:534px;top:197px;width:1px;height:1px;background:#6a6a8a;"></div>
<div style="left:537px;top:197px;width:1px;height:1px;background:#6a6a8a;"></div>
<div style="left:553px;top:197px;width:1px;height:1px;background:#6a6a8a;"></div>
<div style="left:556px;top:197px;width:1px;height:1px;background:#6a6a8a;"></div>
<div style="left:559px;top:197px;width:1px;height:1px;background:#6a6a8a;"></div>
<div style="left:575px;top:197px;width:1px;height:1px;background:#6a6a8a;"></div>
<div style="left:578px;top:197px;width:1px;height:1px;background:#6a6a8a;"></div>
<div style="left:581px;top:197px;width:1px;height:1px;background:#6a6a8a;"></div>
<div style="left:597px;top:197px;width:1px;height:1px;background:#6a6a8a;"></div>
<div style="left:600px;top:197px;width:1px;height:1px;background:#6a6a8a;"></div>
<div style="left:603px;top:197px;width:1px;height:1px;background:#6a6a8a;"></div>
<div style="left:619px;top:197px;width:1px;height:1px;background:#6a6a8a;"></div>
<div style="left:622px;top:197px;width:1px;height:1px;background:#6a6a8a;"></div>
<div style="left:625px;top:197px;width:1px;height:1px;background:#6a6a8a;"></div>
<div style="left:641px;top:197px;width:1px;height:1px;background:#6a6a8a;"></div>
<div style="left:644px;top:197px;width:1px;height:1px;background:#6a6a8a;"></div>
<div style="left:647px;top:197px;width:1px;height:1px;background:#6a6a8a;"></div>
<div style="left:663px;top:197px;width:1px;height:1px;background:#6a6a8a;"></div>
<div style="left:666px;top:197px;width:1px;height:1px;background:#6a6a8a;"></div>
<div style="left:669px;top:197px;width:1px;height:1px;background:#6a6a8a;"></div>
<div style="left:685px;top:197px;width:1px;height:1px;background:#6a6a8a;"></div>
<div style="left:688px;top:197px;width:1px;height:1px;background:#6a6a8a;"></div>
<div style="left:691px;top:197px;width:1px;height:1px;background:#6a6a8a;"></div>
<div style="left:707px;top:197px;width:1px;height:1px;background:#6a6a8a;"></div>
<div style="left:710px;top:197px;width:1px;height:1px;background:#6a6a8a;"></div>
<div style="left:713px;top:197px;width:1px;height:1px;background:#6a6a8a;"></div>
<div style="left:729px;top:197px;width:1px;height:1px;background:#6a6a8a;"></div>
<div style="left:732px;top:197px;width:1px;height:1px;background:#6a6a8a;"></div>
<div style="left:735px;top:197px;width:1px;height:1px;background:#6a6a8a;"></div>
<div style="left:751px;top:197px;width:1px;height:1px;background:#6a6a8a;"></div>
<div style="left:754px;top:197px;width:1px;height:1px;background:#6a6a8a;"></div>
<div style="left:757px;top:197px;width:1px;height:1px;background:#6a6a8a;"></div>
<div style="left:773px;top:197px;width:1px;height:1px;background:#6a6a8a;"></div>
<div style="left:776px;top:197px;width:1px;height:1px;background:#6a6a8a;"></div>
<div style="left:779px;top:197px;width:1px;height:1px;background:#6a6a8a;"></div>
<div style="left:795px;top:197px;width:1px;height:1px;background:#6a6a8a;"></div>
<div style="left:798px;top:197px;width:1px;height:1px;background:#6a6a8a;"></div>
<div style="left:801px;top:197px;width:1px;height:1px;background:#6a6a8a;"></div>
<div style="left:817px;top:197px;width:1px;height:1px;background:#6a6a8a;"></div>
<div style="left:820px;top:197px;width:1px;height:1px;background:#6a6a8a;"></div>
<div style="left:823px;top:197px;width:1px;height:1px;background:#6a6a8a;"></div>
<div style="left:839px;top:197px;width:1px;height:1px;background:#6a6a8a;"></div>
<div style="left:842px;top:197px;width:1px;height:1px;background:#6a6a8a;"></div>
<div style="left:845px;top:197px;width:1px;height:1px;background:#6a6a8a;"></div>
<div style="left:861px;top:196px;width:2px;height:2px;background:#3a3a50;"></div>
<div style="left:864px;top:196px;width:2px;height:2px;background:#3a3a50;"></div>
<div style="left:883px;top:197px;width:1px;height:1px;background:#6a6a8a;"></div>
<div style="left:886px;top:197px;width:1px;height:1px;background:#6a6a8a;"></div>
<div style="left:889px;top:197px;width:1px;height:1px;background:#6a6a8a;"></div>
<div style="left:905px;top:197px;width:1px;height:1px;background:#6a6a8a;"></div>
<div style="left:908px;top:197px;width:1px;height:1px;background:#6a6a8a;"></div>
<div style="left:911px;top:197px;width:1px;height:1px;background:#6a6a8a;"></div>
<div style="left:927px;top:197px;width:1px;height:1px;background:#6a6a8a;"></div>
<div style="left:930px;top:197px;width:1px;height:1px;background:#6a6a8a;"></div>
<div style="left:933px;top:197px;width:1px;height:1px;background:#6a6a8a;"></div>
<div style="left:949px;top:197px;width:1px;height:1px;background:#6a6a8a;"></div>
<div style="left:952px;top:197px;width:1px;height:1px;background:#6a6a8a;"></div>
<div style="left:955px;top:197px;width:1px;height:1px;background:#6a6a8a;"></div>
<div style="left:971px;top:197px;width:1px;height:1px;background:#6a6a8a;"></div>
<div style="left:974px;top:197px;width:1px;height:1px;background:#6a6a8a;"></div>
<div style="left:977px;top:197px;width:1px;height:1px;background:#6a6a8a;"></div>
<div class="t" style="left:297px;top:167px;font-size:10px;line-height:10px;font-weight:normal;color:#1a1a1a;letter-spacing:0.017px;">Montag, 9.02 2026  [KW: 7]</div>
<div class="t" style="left:534px;top:167px;font-size:10px;line-height:10px;font-weight:normal;color:#1a1a1a;letter-spacing:-0.063px;">Dienstag, 10.02 2026  [KW: 7]</div>
<div class="t" style="left:759px;top:166px;font-size:12px;line-height:12px;font-weight:bold;color:#1a1a1a;letter-spacing:-0.017px;">Mittwoch, 11.02 2026  [KW: 7]</div>
<div style="left:7px;top:222px;width:230px;height:480px;background:#f0f0f0;"></div>
<div style="left:7px;top:221px;width:230px;height:1px;background:#a8a8a8;"></div>
<div class="t" style="left:17px;top:244px;font-size:11px;line-height:11px;font-weight:normal;color:#111;letter-spacing:-0.099px;">M: Besserwisser, Karl (817)</div>
<div style="left:220px;top:252px;width:1px;height:1px;background:#4a2050;"></div>
<div style="left:223px;top:252px;width:1px;height:1px;background:#4a2050;"></div>
<div style="left:226px;top:252px;width:1px;height:1px;background:#4a2050;"></div>
<div style="left:7px;top:276px;width:982px;height:1px;background:#c9c9c9"></div>
<div class="t" style="left:17px;top:299px;font-size:11px;line-height:11px;font-weight:normal;color:#111;letter-spacing:-0.157px;">M: Bienchen, Fleiss (815)</div>
<div style="left:220px;top:307px;width:1px;height:1px;background:#4a2050;"></div>
<div style="left:223px;top:307px;width:1px;height:1px;background:#4a2050;"></div>
<div style="left:226px;top:307px;width:1px;height:1px;background:#4a2050;"></div>
<div style="left:7px;top:331px;width:982px;height:1px;background:#c9c9c9"></div>
<div class="t" style="left:17px;top:354px;font-size:11px;line-height:11px;font-weight:normal;color:#111;letter-spacing:-0.162px;">M: Guido Geselle (1180)</div>
<div style="left:220px;top:362px;width:1px;height:1px;background:#4a2050;"></div>
<div style="left:223px;top:362px;width:1px;height:1px;background:#4a2050;"></div>
<div style="left:226px;top:362px;width:1px;height:1px;background:#4a2050;"></div>
<div style="left:7px;top:386px;width:982px;height:1px;background:#c9c9c9"></div>
<div class="t" style="left:17px;top:409px;font-size:11px;line-height:11px;font-weight:normal;color:#111;letter-spacing:0.033px;">M: Herbert Helfer (1200)</div>
<div style="left:220px;top:417px;width:1px;height:1px;background:#4a2050;"></div>
<div style="left:223px;top:417px;width:1px;height:1px;background:#4a2050;"></div>
<div style="left:226px;top:417px;width:1px;height:1px;background:#4a2050;"></div>
<div style="left:7px;top:441px;width:982px;height:1px;background:#c9c9c9"></div>
<div class="t" style="left:17px;top:464px;font-size:11px;line-height:11px;font-weight:normal;color:#111;letter-spacing:0.119px;">M: Immernett, Peter (818)</div>
<div style="left:220px;top:472px;width:1px;height:1px;background:#4a2050;"></div>
<div style="left:223px;top:472px;width:1px;height:1px;background:#4a2050;"></div>
<div style="left:226px;top:472px;width:1px;height:1px;background:#4a2050;"></div>
<div style="left:7px;top:496px;width:982px;height:1px;background:#c9c9c9"></div>
<div class="t" style="left:17px;top:519px;font-size:11px;line-height:11px;font-weight:normal;color:#111;letter-spacing:-0.113px;">M: Konrad Krank (1230)</div>
<div style="left:220px;top:527px;width:1px;height:1px;background:#4a2050;"></div>
<div style="left:223px;top:527px;width:1px;height:1px;background:#4a2050;"></div>
<div style="left:226px;top:527px;width:1px;height:1px;background:#4a2050;"></div>
<div style="left:7px;top:551px;width:982px;height:1px;background:#c9c9c9"></div>
<div class="t" style="left:17px;top:574px;font-size:11px;line-height:11px;font-weight:normal;color:#111;letter-spacing:0.028px;">M: Max Monteur (1160)</div>
<div style="left:220px;top:582px;width:1px;height:1px;background:#4a2050;"></div>
<div style="left:223px;top:582px;width:1px;height:1px;background:#4a2050;"></div>
<div style="left:226px;top:582px;width:1px;height:1px;background:#4a2050;"></div>
<div style="left:7px;top:606px;width:982px;height:1px;background:#c9c9c9"></div>
<div class="t" style="left:17px;top:629px;font-size:11px;line-height:11px;font-weight:normal;color:#111;letter-spacing:0.053px;">M: Meister, Moritz (823)</div>
<div style="left:220px;top:637px;width:1px;height:1px;background:#4a2050;"></div>
<div style="left:223px;top:637px;width:1px;height:1px;background:#4a2050;"></div>
<div style="left:226px;top:637px;width:1px;height:1px;background:#4a2050;"></div>
<div style="left:7px;top:661px;width:982px;height:1px;background:#c9c9c9"></div>
<div class="t" style="left:17px;top:684px;font-size:11px;line-height:11px;font-weight:normal;color:#111;letter-spacing:-0.090px;">M: Nimmersatt, Paulchen (816)</div>
<div style="left:220px;top:692px;width:1px;height:1px;background:#4a2050;"></div>
<div style="left:223px;top:692px;width:1px;height:1px;background:#4a2050;"></div>
<div style="left:226px;top:692px;width:1px;height:1px;background:#4a2050;"></div>
<div style="left:478px;top:222px;width:1px;height:480px;background:#000;"></div>
<div style="left:720px;top:222px;width:1px;height:480px;background:#000;"></div>
<div style="left:962px;top:222px;width:1px;height:480px;background:#000;"></div>
<div style="left:270px;top:223px;width:719px;height:52px;background:#ff7f3f;border:1px solid #c0602a;border-right:none;"></div>
<div style="left:271px;top:224px;width:718px;height:5px;background:#0000ff;"></div>
<svg style="left:725px;top:243px" width="16" height="16" viewBox="0 0 16 16">
<path d="M3 0h3v1h1v-1h3v3l4.8 4.2v6l-9.8 3.8-5-3.6v-8.6z" fill="#56666c"/>
<path d="M1 4.6L4 1.2h5.6l0.8 2.4-5.4 5.8-4.9-1.8z" fill="#ab6d6c"/>
<path d="M2.5 3.5L4.5 1.5h2l-3 3z" fill="#c88080"/>
<path d="M1 8.4l4.6 1.9v4.8l-4.6-2.9z" fill="#ffffff"/>
<path d="M6 10.1l4.4-5.4 3.6 3.1v4.8l-8 3.1z" fill="#f3f3f3"/>
<path d="M8.2 9.6l3.2-1.3v5.3l-3.2 1.2z" fill="#b89a6a"/>
<path d="M8.9 10l2-0.8v4.3l-2 0.7z" fill="#6a6472"/>
</svg>
<div class="t" style="left:742px;top:234px;font-size:11px;line-height:11px;font-weight:normal;color:#fff8ec;letter-spacing:-0.224px;">Kesseltausch NL Essenbach P2500158 (Projekt)</div>
<div class="t" style="left:742px;top:260px;font-size:11px;line-height:11px;font-weight:normal;color:#fff8ec;letter-spacing:0.063px;">Beginn: 09.02.2026 07:30:00</div>
<div style="left:270px;top:333px;width:719px;height:52px;background:#ff7f3f;border:1px solid #c0602a;border-right:none;"></div>
<div style="left:271px;top:334px;width:718px;height:5px;background:#0000ff;"></div>
<svg style="left:725px;top:353px" width="16" height="16" viewBox="0 0 16 16">
<path d="M3 0h3v1h1v-1h3v3l4.8 4.2v6l-9.8 3.8-5-3.6v-8.6z" fill="#56666c"/>
<path d="M1 4.6L4 1.2h5.6l0.8 2.4-5.4 5.8-4.9-1.8z" fill="#ab6d6c"/>
<path d="M2.5 3.5L4.5 1.5h2l-3 3z" fill="#c88080"/>
<path d="M1 8.4l4.6 1.9v4.8l-4.6-2.9z" fill="#ffffff"/>
<path d="M6 10.1l4.4-5.4 3.6 3.1v4.8l-8 3.1z" fill="#f3f3f3"/>
<path d="M8.2 9.6l3.2-1.3v5.3l-3.2 1.2z" fill="#b89a6a"/>
<path d="M8.9 10l2-0.8v4.3l-2 0.7z" fill="#6a6472"/>
</svg>
<div class="t" style="left:742px;top:344px;font-size:11px;line-height:11px;font-weight:normal;color:#fff8ec;letter-spacing:-0.224px;">Kesseltausch NL Essenbach P2500158 (Projekt)</div>
<div class="t" style="left:742px;top:370px;font-size:11px;line-height:11px;font-weight:normal;color:#fff8ec;letter-spacing:0.063px;">Beginn: 09.02.2026 07:30:00</div>
<div style="left:259px;top:553px;width:682px;height:52px;background:#ff7f3f;border:1px solid #c0602a;"></div>
<div style="left:260px;top:554px;width:680px;height:5px;background:#0000ff;"></div>
<svg style="left:483px;top:573px" width="16" height="16" viewBox="0 0 16 16">
<path d="M3 0h3v1h1v-1h3v3l4.8 4.2v6l-9.8 3.8-5-3.6v-8.6z" fill="#56666c"/>
<path d="M1 4.6L4 1.2h5.6l0.8 2.4-5.4 5.8-4.9-1.8z" fill="#ab6d6c"/>
<path d="M2.5 3.5L4.5 1.5h2l-3 3z" fill="#c88080"/>
<path d="M1 8.4l4.6 1.9v4.8l-4.6-2.9z" fill="#ffffff"/>
<path d="M6 10.1l4.4-5.4 3.6 3.1v4.8l-8 3.1z" fill="#f3f3f3"/>
<path d="M8.2 9.6l3.2-1.3v5.3l-3.2 1.2z" fill="#b89a6a"/>
<path d="M8.9 10l2-0.8v4.3l-2 0.7z" fill="#6a6472"/>
</svg>
<div class="t" style="left:500px;top:564px;font-size:11px;line-height:11px;font-weight:normal;color:#fff8ec;letter-spacing:-0.181px;">neue Hzg für EFH Simbach P260001 (Projekt)</div>
<div class="t" style="left:500px;top:590px;font-size:11px;line-height:11px;font-weight:normal;color:#fff8ec;letter-spacing:0.063px;">Beginn: 09.02.2026 07:00:00</div>
<div style="left:259px;top:608px;width:682px;height:52px;background:#ff7f3f;border:1px solid #c0602a;"></div>
<div style="left:260px;top:609px;width:680px;height:5px;background:#0000ff;"></div>
<svg style="left:483px;top:628px" width="16" height="16" viewBox="0 0 16 16">
<path d="M3 0h3v1h1v-1h3v3l4.8 4.2v6l-9.8 3.8-5-3.6v-8.6z" fill="#56666c"/>
<path d="M1 4.6L4 1.2h5.6l0.8 2.4-5.4 5.8-4.9-1.8z" fill="#ab6d6c"/>
<path d="M2.5 3.5L4.5 1.5h2l-3 3z" fill="#c88080"/>
<path d="M1 8.4l4.6 1.9v4.8l-4.6-2.9z" fill="#ffffff"/>
<path d="M6 10.1l4.4-5.4 3.6 3.1v4.8l-8 3.1z" fill="#f3f3f3"/>
<path d="M8.2 9.6l3.2-1.3v5.3l-3.2 1.2z" fill="#b89a6a"/>
<path d="M8.9 10l2-0.8v4.3l-2 0.7z" fill="#6a6472"/>
</svg>
<div class="t" style="left:500px;top:619px;font-size:11px;line-height:11px;font-weight:normal;color:#fff8ec;letter-spacing:-0.181px;">neue Hzg für EFH Simbach P260001 (Projekt)</div>
<div class="t" style="left:500px;top:645px;font-size:11px;line-height:11px;font-weight:normal;color:#fff8ec;letter-spacing:0.063px;">Beginn: 09.02.2026 07:00:00</div>
<div style="left:861px;top:222px;width:3px;height:480px;background:#ff0000;"></div>
<div style="left:3px;top:537px;width:959px;height:144px;border:3px solid #fc3a40;box-shadow:inset 0 8px 7px -4px rgba(0,0,0,0.36), inset -7px 0 6px -4px rgba(0,0,0,0.16), 0 7px 6px -3px rgba(0,0,0,0.34);"></div>
</body></html>
